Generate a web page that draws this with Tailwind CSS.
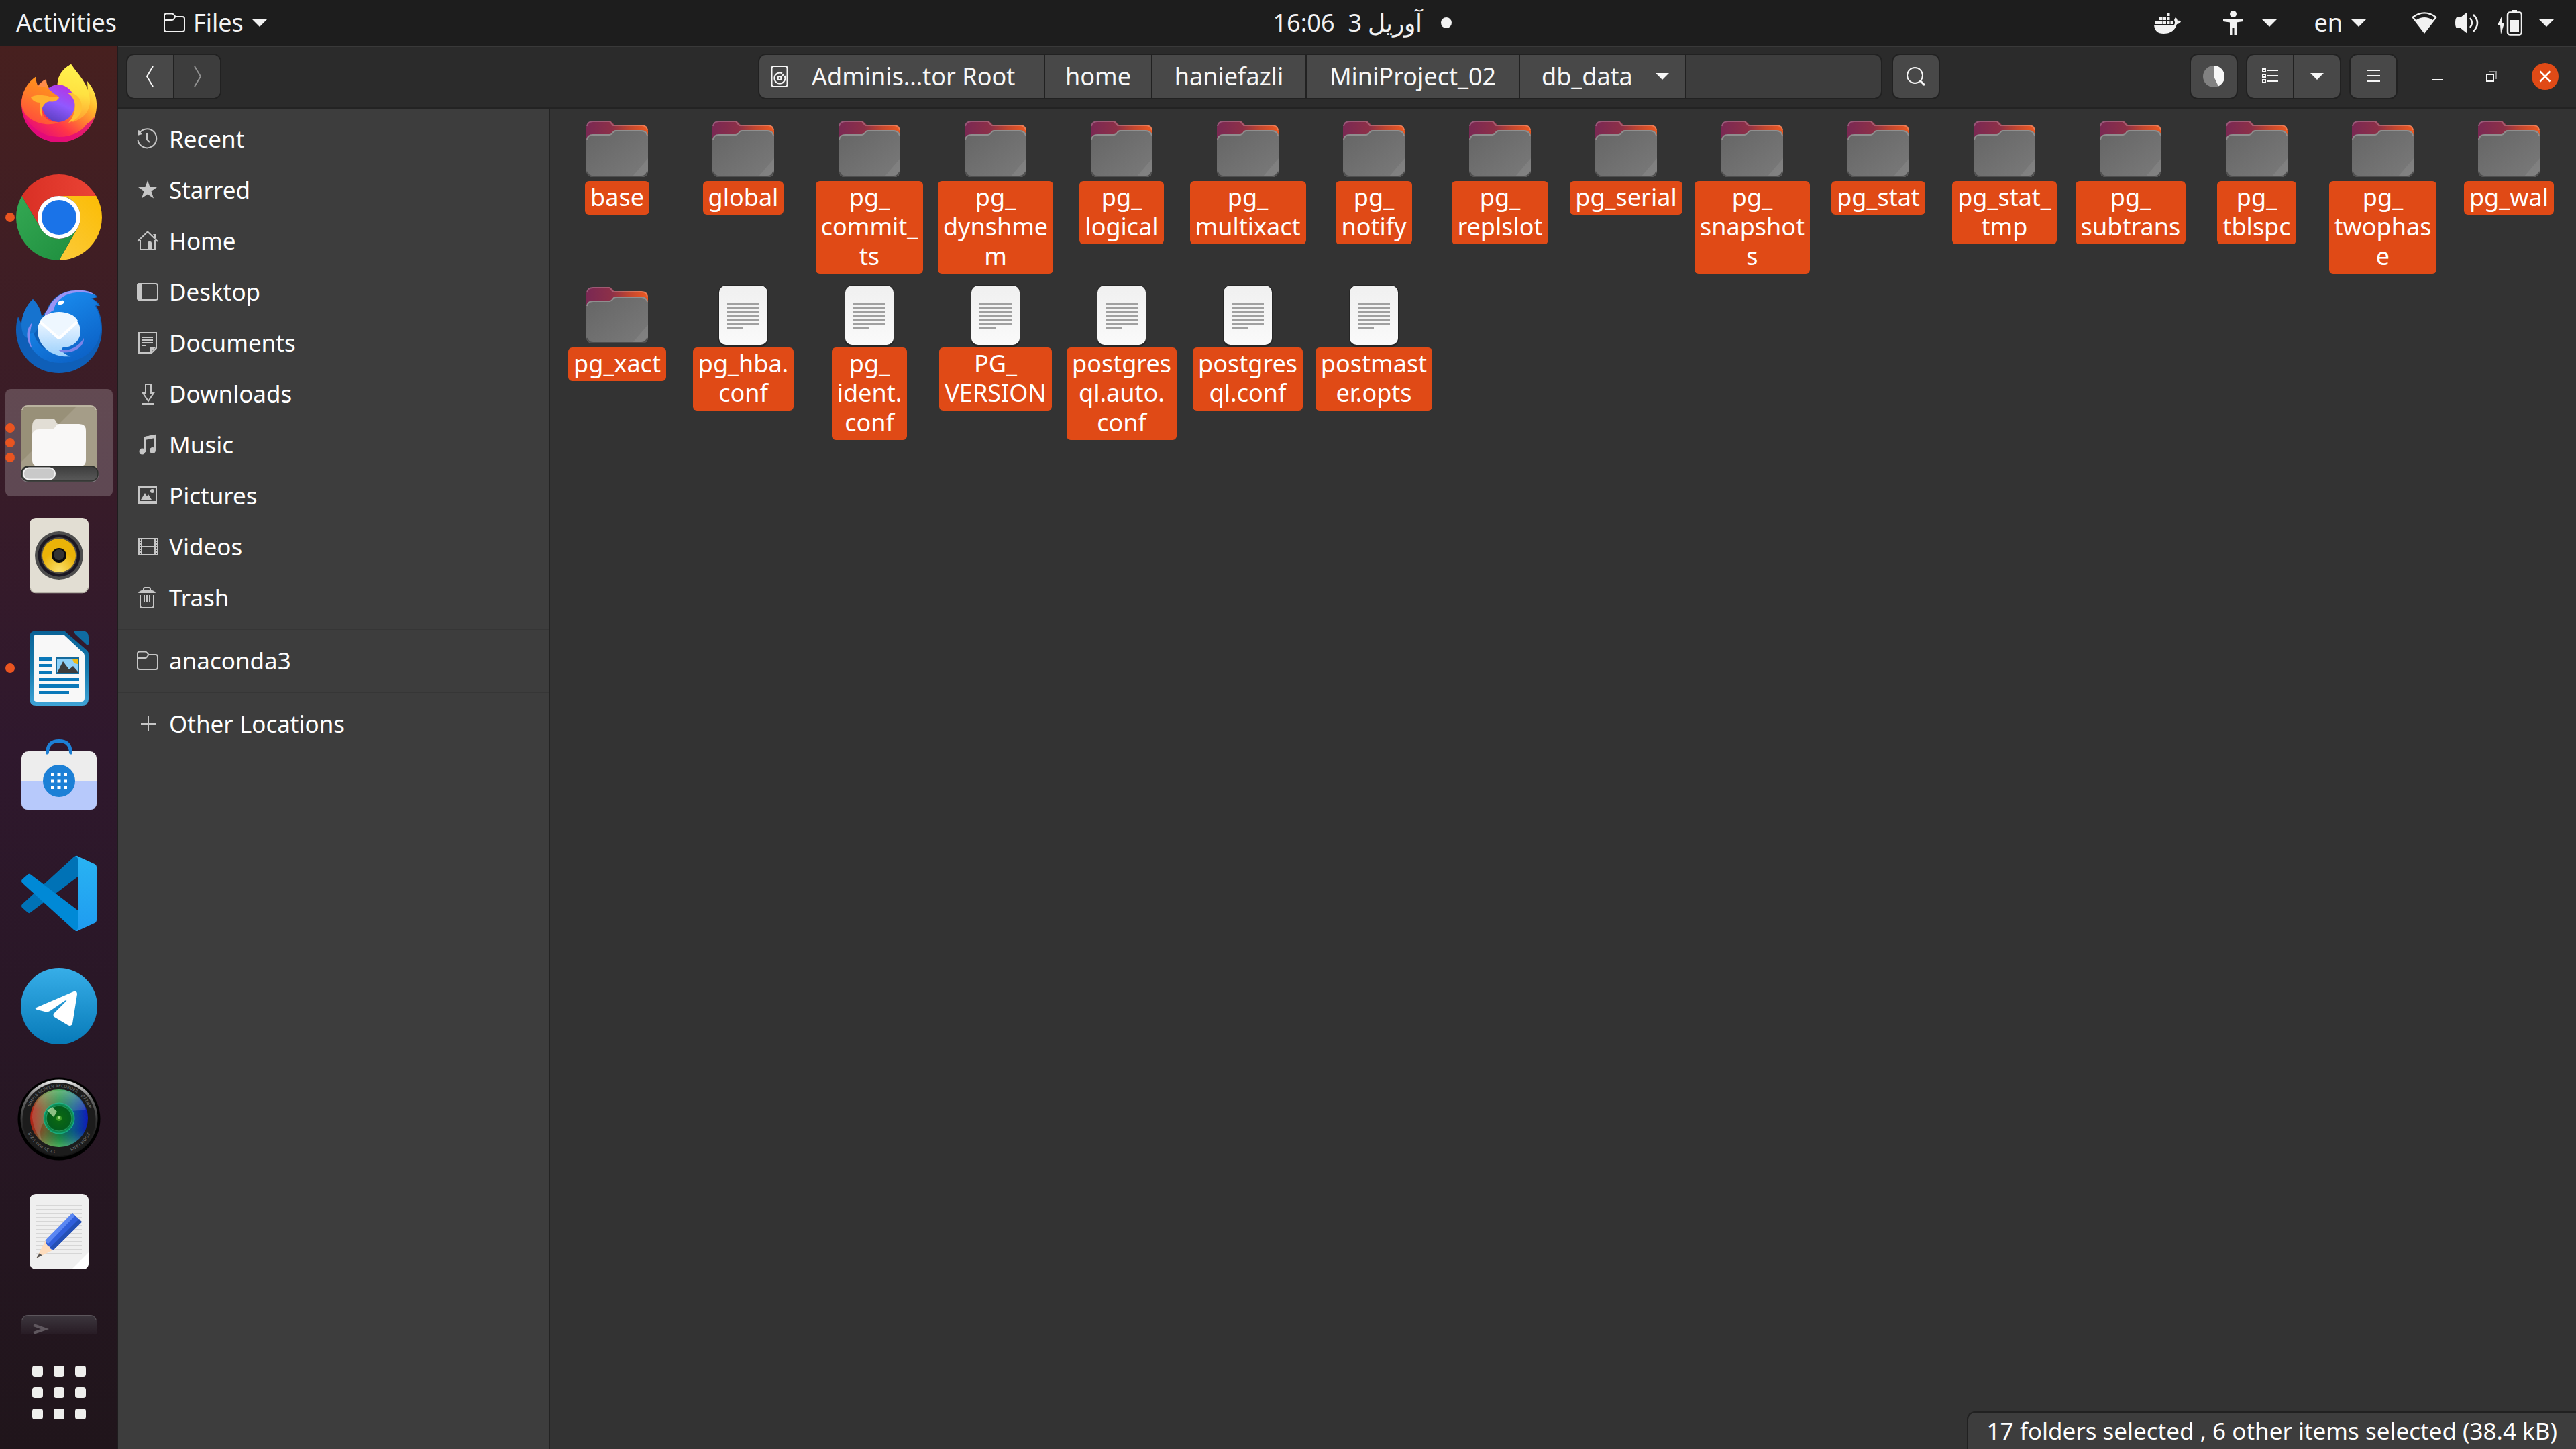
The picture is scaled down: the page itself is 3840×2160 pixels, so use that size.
<!DOCTYPE html>
<html lang="en">
<head>
<meta charset="utf-8">
<title>db_data</title>
<script src="https://cdn.jsdelivr.net/npm/@tailwindcss/browser@4"></script>
</head>
<body class="h-screen flex flex-col overflow-hidden bg-[#333333] text-white font-['Noto_Sans',sans-serif] text-[35px] leading-[44px]">

<!-- Shared symbols -->
<svg class="absolute size-0" aria-hidden="true">
  <defs>
    <linearGradient id="fBack" x1="0" y1="0" x2="1" y2="0"><stop offset="0" stop-color="#7a2853"/><stop offset=".42" stop-color="#8d3048"/><stop offset=".7" stop-color="#c3472f"/><stop offset="1" stop-color="#ee5a22"/></linearGradient>
    <linearGradient id="fFront" x1="0" y1="0" x2="1" y2="1"><stop offset="0" stop-color="#656565"/><stop offset="1" stop-color="#7a7a7a"/></linearGradient>
    <linearGradient id="paper" x1="0" y1="0" x2="0" y2="1"><stop offset="0" stop-color="#f0f0f0"/><stop offset="1" stop-color="#fafafa"/></linearGradient>
  </defs>
  <symbol id="folder" viewBox="0 0 96 96">
    <path d="M2 16Q2 6 12 6H36Q39 6 40.500 8.500L44 12H84Q94 12 94 22V60H2Z" fill="url(#fBack)"/>
    <path d="M3 14Q4 7 12 7H37L42 13H85Q92 13 93 20" fill="none" stroke="#fff" stroke-opacity=".22" stroke-width="2"/>
    <path d="M2 36Q2 26 12 26H36Q39 26 40.500 24L43 21Q44 20 46 20H84Q94 20 94 30V80Q94 90 84 90H12Q2 90 2 80Z" fill="url(#fFront)"/>
    <path d="M94 62V80Q94 90 84 90H70Z" fill="#fff" fill-opacity=".07"/>
    <path d="M3 34Q4 27 12 27H37Q39 27 41 24.500Q43 21 46 21H84Q91 21 93 28" fill="none" stroke="#999" stroke-width="2" stroke-opacity=".8"/>
    <path d="M3 82Q5 89 12 89H84Q91 89 93 82" fill="none" stroke="#4e4e4e" stroke-width="2"/>
  </symbol>
  <symbol id="doc" viewBox="0 0 96 96">
    <rect x="11" y="3" width="74" height="92" rx="11" fill="#262626"/>
    <rect x="12" y="4" width="72" height="88" rx="10" fill="url(#paper)"/>
    <path d="M24 31H72M24 37H72M24 43H72M24 49H72M24 55H72M24 61H72M24 67H48" stroke="#a0a0a0" stroke-width="2"/>
  </symbol>
  <symbol id="tri" viewBox="0 0 24 12"><path d="M0 0H24L12 12Z" fill="currentColor"/></symbol>
  <symbol id="folder-sym" viewBox="0 0 32 32"><path d="M1 27V5Q1 3 3.500 2.500H12Q14 2.500 15 4L17.500 7H28Q31 7 31 10V26Q31 29 28 29H4Q1 29 1 26ZM1 13Q1 12 3 12H12.500Q14 12 15 10.500L17.500 7" fill="none" stroke="currentColor" stroke-width="2"/></symbol>
</svg>

<!-- Top bar -->
<header class="h-[68px] shrink-0 bg-[#1d1d1d] text-[#f2f2f2] grid grid-cols-[1fr_auto_1fr] items-center text-[36px]">
  <div class="flex items-center pl-6">
    <button class="mr-[70px]">Activities</button>
    <button class="flex items-center"><svg class="size-8 mr-3"><use href="#folder-sym"/></svg>Files<svg class="w-6 h-3 ml-3"><use href="#tri"/></svg></button>
  </div>
  <button class="flex items-center gap-7 pl-[222px]"><span class="flex gap-5"><span>16:06</span><span>3 آوریل</span></span><span class="size-4 rounded-full bg-[#f2f2f2]"></span></button>
  <div class="flex items-center justify-end pr-8">
    <button aria-label="Docker" class="mr-[63px]"><svg class="w-10 h-8" viewBox="0 0 40 32"><path d="M0 19H30Q32 16 30 12Q31 9 32 8Q35 10 35 13Q38 12 40 14Q39 17 34 18Q30 32 14 32Q1 32 0 19ZM2 13H7V18H2ZM8 13H12.500V18H8ZM13.500 13H18V18H13.500ZM19 13H23.500V18H19ZM24.500 13H28V18H24.500ZM8 7H12.500V12H8ZM13.500 7H18V12H13.500ZM19 7H23.500V12H19ZM19 1H23.500V6H19Z" fill="currentColor"/></svg></button>
    <button aria-label="Accessibility" class="flex items-center gap-[27px] mr-[54px]"><svg class="w-[30px] h-9" viewBox="0 0 30 36"><circle cx="15" cy="5" r="5" fill="currentColor"/><path d="M0 13H30V16L20 17.500V36H16.500V26H13.500V36H10V17.500L0 16Z" fill="currentColor"/></svg><svg class="w-6 h-3"><use href="#tri"/></svg></button>
    <button class="flex items-center gap-3 mr-[67px]">en<svg class="w-6 h-3"><use href="#tri"/></svg></button>
    <button aria-label="System" class="flex items-center gap-6">
      <span class="flex items-center gap-[27px]">
        <svg class="w-[38px] h-8" viewBox="0 0 38 32"><path d="M0 7.500Q19 -7 38 7.500L19 32ZM3.500 8L6.500 12Q19 4 31.500 12L34.500 8Q19 -3 3.500 8Z" fill="currentColor" fill-rule="evenodd"/></svg>
        <svg class="w-9 h-9" viewBox="0 0 36 36"><path d="M0 18Q0 12 2 10H8L18 2V34L8 26H2Q0 24 0 18Z" fill="currentColor"/><path d="M22 11Q28 18 22 25M27 6Q39 18 27 31" fill="none" stroke="currentColor" stroke-width="2.500"/></svg>
        <svg class="w-[37px] h-[38px]" viewBox="0 0 37 38"><path d="M7 8L0 22H4L5 36L10 20H6Z" fill="currentColor"/><path d="M22 0H29V3H22Z" fill="currentColor"/><rect x="15" y="3.500" width="21" height="33" rx="3.500" fill="none" stroke="currentColor" stroke-width="2.500"/><rect x="19" y="15" width="13" height="18" fill="currentColor"/></svg>
      </span>
      <svg class="w-6 h-3"><use href="#tri"/></svg>
    </button>
  </div>
</header>

<div class="flex flex-1 min-h-0">

<!-- Dock -->
<nav aria-label="Dock" class="w-44 shrink-0 flex flex-col border-r-2 border-[#1f1c1e] bg-linear-to-b from-[#47201f] via-[#2f182d] to-[#20151b]">
  <ul class="flex-1 min-h-0 overflow-hidden flex flex-col gap-2 pl-2 pr-1.5 pt-2">
    <li class="h-40 shrink-0 grid place-items-center"><button aria-label="Firefox">
      <svg class="size-32" viewBox="0 0 128 128">
        <defs>
          <linearGradient id="ff1" x1=".85" y1=".1" x2=".2" y2=".95"><stop offset=".05" stop-color="#fff44f"/><stop offset=".3" stop-color="#ffb52b"/><stop offset=".5" stop-color="#ff7b31"/><stop offset=".7" stop-color="#ff3647"/><stop offset="1" stop-color="#e3067f"/></linearGradient>
          <linearGradient id="ff2" x1=".7" y1="0" x2=".3" y2="1"><stop offset="0" stop-color="#b833e1"/><stop offset=".5" stop-color="#9059ff"/><stop offset="1" stop-color="#5b3fc0"/></linearGradient>
          <linearGradient id="ff3" x1=".6" y1="0" x2=".5" y2="1"><stop offset="0" stop-color="#fff44f"/><stop offset=".5" stop-color="#ffe141"/><stop offset="1" stop-color="#ff9a2e"/></linearGradient>
          <linearGradient id="ff4" x1=".7" y1="0" x2=".3" y2="1"><stop offset="0" stop-color="#ff9a16"/><stop offset=".5" stop-color="#ff7a2a"/><stop offset="1" stop-color="#ff4a3c"/></linearGradient>
        </defs>
        <path d="M82 4C90 16 103 30 107 48L106 29C116 40 121 54 120 68C118 98 94 120 64 120C32 120 8 96 8 62C8 48 16 33 30 22C29 28 31 33 33 37C36 33 40 30 45 26C45 32 47 38 52 42L62 38C60 22 70 10 82 4Z" fill="url(#ff1)"/>
        <path d="M9 72C18 98 40 112 64 112C84 112 98 104 106 92C110 90 114 86 117 82C110 106 88 120 64 120C34 120 12 98 9 72Z" fill="#e0097c" opacity=".8"/>
        <path d="M82 4C90 16 110 34 110 58C110 76 98 86 84 90C90 78 90 62 84 50C78 42 70 36 62 36C61 22 70 10 82 4Z" fill="url(#ff3)"/>
        <path d="M32 37C35 32 40 28 45 26L45 40Z" fill="#ff8c4a"/>
        <ellipse cx="63" cy="62" rx="25" ry="28" fill="url(#ff2)"/>
        <path d="M76 46C90 46 98 55 98 68C98 80 90 87 78 91C87 82 89 70 87 60C85 53 81 49 76 46Z" fill="#ffc134"/>
        <path d="M30 22C29 28 30 33 32 37C40 36 45 38 50 42C55 47 60 49 64 53C62 58 57 60 50 59C44 60 39 64 38 70C39 84 50 91 63 90C50 98 12 92 8 64C8 46 16 31 30 22Z" fill="url(#ff4)"/>
        <path d="M22 53C30 48 42 50 50 52C56 53 60 52 64 53C62 58 57 60 50 59C44 60 41 64 39 69L38 82C35 76 35 68 36 61C30 61 24 58 22 53Z" fill="#ffb12e"/>
      </svg></button></li>
    <li class="h-40 shrink-0 grid place-items-center relative"><span class="absolute left-0 top-[73px] size-3.5 rounded-full bg-[#e95420]"></span><button aria-label="Google Chrome">
      <svg class="size-32" viewBox="0 0 128 128">
        <defs><linearGradient id="cr" x1="0" x2="1"><stop offset="0" stop-color="#d93025"/><stop offset="1" stop-color="#ea4335"/></linearGradient><linearGradient id="cg" x1="0" x2="1" y1="0" y2="1"><stop offset="0" stop-color="#34a853"/><stop offset="1" stop-color="#1e8e3e"/></linearGradient><linearGradient id="cy" x1="1" x2=".3" y1="0" y2="1"><stop offset="0" stop-color="#fbbc04"/><stop offset="1" stop-color="#fcc934"/></linearGradient></defs>
        <path d="M64 32H119.400A64 64 0 0 0 8.600 32L36.300 80A32 32 0 0 1 64 32Z" fill="url(#cr)"/>
        <path d="M119.400 32A64 64 0 0 1 64 128L91.700 80A32 32 0 0 0 64 32Z" fill="url(#cy)"/>
        <path d="M64 128A64 64 0 0 1 8.600 32L36.300 80A32 32 0 0 0 91.700 80Z" fill="url(#cg)"/>
        <circle cx="64" cy="64" r="32" fill="#fff"/><circle cx="64" cy="64" r="26" fill="#1a73e8"/>
      </svg></button></li>
    <li class="h-40 shrink-0 grid place-items-center"><button aria-label="Thunderbird">
      <svg class="size-32" viewBox="0 0 128 128">
        <defs><linearGradient id="tb1" x1=".2" y1="0" x2=".8" y2="1"><stop offset="0" stop-color="#1b91f3"/><stop offset="1" stop-color="#0b5fc4"/></linearGradient><linearGradient id="tb2" x1="0" y1="0" x2="0" y2="1"><stop offset="0" stop-color="#fff"/><stop offset=".5" stop-color="#cfe8ff"/><stop offset="1" stop-color="#9bd0fb"/></linearGradient></defs>
        <path d="M91 5C104 4 116 8 122 15C119 16 115 16 112 17C118 19 123 23 125 28L119 27C125 38 128 50 128 63C128 100 99 128 64 128C28 128 0 100 0 64C0 56 1 50 3 44C5 48 6 51 8 55C9 40 16 26 25 18C33 26 37 34 38 44C41 40 44 37 46 34C52 16 70 4 91 5Z" fill="#0f5fb8"/>
        <path d="M91 7C104 6 116 9 120 15L111 17C117 19 121 23 123 28L117 27C124 38 126 50 126 62C125 92 98 113 66 113C40 113 18 96 16 68C18 58 22 54 24 53C24 68 30 84 42 92L96 60L44 44C48 22 68 7 91 7Z" fill="url(#tb1)"/>
        <path d="M8 55C9 40 16 26 25 18C33 26 37 34 38 46L30 66C24 72 18 66 17 76C10 74 8 64 8 55Z" fill="#1673cf"/>
        <path d="M43 40C44 37 46 34 48 32C54 16 72 4 91 5C102 4 112 7 118 12C104 6 86 7 74 12C62 18 56 28 57 34C50 36 46 44 43 46Z" fill="#9a94f5"/>
        <path d="M24 53C14 62 14 80 24 92C19 80 20 66 24 53Z" fill="#8a8cf0"/>
        <path d="M64 38C82 38 96 50 96 66C96 80 84 90 70 90C64 92 72 102 82 103C56 106 32 90 32 64C32 50 46 38 64 38Z" fill="url(#tb2)"/>
        <path d="M62 93C80 96 92 90 101 76C102 88 86 100 68 97Z" fill="#7c83e8"/>
        <path d="M36 50L60 72Q64 76 68 72L92 50C88 42 76 37 64 37C52 37 40 42 36 50Z" fill="#eef7ff"/>
        <path d="M36 52L61 74Q64 77 67 74L91 52" fill="none" stroke="#fff" stroke-width="4"/>
        <ellipse cx="67" cy="23" rx="5" ry="3" fill="#fff" transform="rotate(-20 67 23)"/>
      </svg></button></li>
    <li class="h-40 shrink-0 grid place-items-center relative rounded-lg bg-white/20">
      <span class="absolute left-0 top-[51px] flex flex-col gap-2"><span class="size-3.5 rounded-full bg-[#e95420]"></span><span class="size-3.5 rounded-full bg-[#e95420]"></span><span class="size-3.5 rounded-full bg-[#e95420]"></span></span>
      <button aria-label="Files">
      <svg class="size-32" viewBox="0 0 128 128">
        <defs><linearGradient id="hd" x1="0" y1="0" x2="0" y2="1"><stop offset="0" stop-color="#3c3c3c"/><stop offset="1" stop-color="#5a5a5a"/></linearGradient></defs>
        <rect x="8" y="8" width="112" height="112" rx="9" fill="#989078"/>
        <path d="M91 9H111Q120 9 120 18V110H8V92Z" fill="#a59d88"/>
        <path d="M9 15Q10 9 17 9H111Q118 9 119 15" fill="none" stroke="#c4bdab" stroke-width="1.500"/>
        <path d="M24 40Q24 28 34 28H54Q57 28 58 30L63 38V60H24Z" fill="#e2ded5"/>
        <path d="M24 52Q25 44 34 44H53Q56 44 58 41L61 37Q62 36 64 36H94Q104 36 104 46V90Q104 99 95 99H33Q24 99 24 90Z" fill="#f9f8f7"/>
        <rect x="7" y="100" width="116" height="23" rx="11" fill="#7b757a"/>
        <rect x="8" y="99" width="114" height="22" rx="10" fill="url(#hd)" stroke="#2c2f2b" stroke-width="1.500"/>
        <rect x="11" y="101.500" width="47" height="17" rx="8" fill="#c9c9c9" stroke="#f2f2f2" stroke-width="2"/>
      </svg></button></li>
    <li class="h-40 shrink-0 grid place-items-center"><button aria-label="Rhythmbox">
      <svg class="size-32" viewBox="0 0 128 128">
        <defs><radialGradient id="rb" cx=".5" cy=".95" r=".8"><stop offset="0" stop-color="#fbe06a"/><stop offset=".7" stop-color="#eab308"/></radialGradient></defs>
        <rect x="20" y="8" width="88" height="112" rx="9" fill="#e2ded3"/><path d="M21 113Q23 119.500 29 119.500H99Q105 119.500 107 113" fill="none" stroke="#b5b1a6" stroke-width="1.500"/>
        <circle cx="64" cy="64" r="36" fill="#4d4d4d"/><circle cx="64" cy="64" r="31.500" fill="#1a1722"/><circle cx="64" cy="64" r="27" fill="#555146"/><circle cx="64" cy="64" r="25" fill="url(#rb)"/><circle cx="64" cy="64" r="11" fill="#0b0b0b"/><circle cx="64" cy="63" r="8" fill="#333"/>
      </svg></button></li>
    <li class="h-40 shrink-0 grid place-items-center relative"><span class="absolute left-0 top-[73px] size-3.5 rounded-full bg-[#e95420]"></span><button aria-label="LibreOffice Writer">
      <svg class="size-32" viewBox="0 0 128 128">
        <defs><linearGradient id="lw" x1="0" y1="0" x2="0" y2="1"><stop offset="0" stop-color="#0a6296"/><stop offset=".5" stop-color="#157aad"/><stop offset="1" stop-color="#3fa3d6"/></linearGradient></defs>
        <path d="M20 18Q20 8 30 8H69Q73 8 75 11L106 38Q108 40 108 44V110Q108 120 98 120H30Q20 120 20 110Z" fill="url(#lw)"/>
        <path d="M87 8H98Q108 8 108 18V28Q107 32 104 28L88 13Q86 10 87 8Z" fill="#0f6ca2"/>
        <path d="M26 19Q26 14 31 14H68Q71 14 72 15L101 42Q102 44 102 46V109Q102 114 97 114H31Q26 114 26 109Z" fill="#f8f8f8"/>
        <path d="M34 50.500H54M34 60.500H54M34 70.500H54M34 80.500H94M34 90.500H94M34 100.500H79" stroke="#0a78b9" stroke-width="5"/>
        <rect x="59" y="48" width="35" height="25" fill="#156a9c"/><rect x="61" y="50" width="31" height="21" fill="#8ed0f7"/><path d="M61 71L70 54L79 66L85 61L92 69V71Z" fill="#3c3c3c"/><path d="M84 50H92V58Q85 58 84 50Z" fill="#f0bb12"/>
      </svg></button></li>
    <li class="h-40 shrink-0 grid place-items-center"><button aria-label="Software">
      <svg class="size-32" viewBox="0 0 128 128">
        <rect x="8" y="20" width="112" height="87" rx="10" fill="#ededed"/><path d="M8 64H120V97Q120 107 110 107H18Q8 107 8 97Z" fill="#b7c9fb"/>
        <path d="M46.500 22Q47 4.500 64 4.500T81.500 22" fill="none" stroke="#1c80d6" stroke-width="5" stroke-linecap="round"/>
        <circle cx="64" cy="64" r="24" fill="#1c80d6"/>
        <path d="M52 54.500H76M52 64H76M52 73.500H76" stroke="#fff" stroke-width="5" stroke-dasharray="5 4.500"/>
      </svg></button></li>
    <li class="h-40 shrink-0 grid place-items-center"><button aria-label="Visual Studio Code">
      <svg class="size-32" viewBox="0 0 128 128">
        <defs><linearGradient id="vs" x1="0" y1="0" x2="0" y2="1"><stop offset="0" stop-color="#29b3f3"/><stop offset="1" stop-color="#1f9cf0"/></linearGradient></defs>
        <path d="M86 9.500Q89 7 92 8V39L21 92.500Q19 94 17 92L9 85Q7 82.500 9 80Z" fill="#0072b6"/>
        <path d="M9 48Q7 45.500 9 43L17 36Q19 34 21.500 35.500L92 89V120Q89 120 86 118Z" fill="#0089d6"/>
        <path d="M92 8.500L117 20Q120 21.500 120 25V103Q120 106.500 117 108L92 119.500Q90 120.500 88 119.500Q92 119 92 115V13Q92 9 88 8.500Q90 7.500 92 8.500Z" fill="url(#vs)"/>
      </svg></button></li>
    <li class="h-40 shrink-0 grid place-items-center"><button aria-label="Telegram">
      <svg class="size-32" viewBox="0 0 128 128">
        <defs><linearGradient id="tg" x1="0" y1="0" x2="0" y2="1"><stop offset="0" stop-color="#37aee8"/><stop offset="1" stop-color="#077ab8"/></linearGradient></defs>
        <circle cx="64" cy="64" r="57" fill="url(#tg)"/>
        <path d="M30 66Q27 68 31 69L43 72Q48 73 52 70L73 55.500Q77 54 74 57L57 74Q54 77 57 80L77 92Q82 95 84 90L91 46Q91 41 86 42Z" fill="#fff"/>
      </svg></button></li>
    <li class="h-40 shrink-0 grid place-items-center"><button aria-label="SimpleScreenRecorder">
      <svg class="size-32" viewBox="0 0 128 128">
        <defs>
          <linearGradient id="sr1" x1="0" y1="0" x2="0" y2="1"><stop offset="0" stop-color="#f0f0f0"/><stop offset=".25" stop-color="#666"/><stop offset=".6" stop-color="#2a2a2a"/><stop offset="1" stop-color="#111"/></linearGradient>
          <linearGradient id="sr2" x1="0" x2="1"><stop offset="0" stop-color="#c4150f"/><stop offset=".25" stop-color="#7a5a2c"/><stop offset=".5" stop-color="#0b7a3a"/><stop offset=".75" stop-color="#0a5490"/><stop offset="1" stop-color="#0c10c4"/></linearGradient>
          <linearGradient id="sr3" x1="0" y1="0" x2="0" y2="1"><stop offset="0" stop-color="#8fe28a"/><stop offset=".35" stop-color="#3fae5a" stop-opacity=".1"/><stop offset=".7" stop-color="#0a7040" stop-opacity=".2"/><stop offset="1" stop-color="#7fe07a"/></linearGradient>
          <radialGradient id="sr4"><stop offset="0" stop-color="#0c6a10"/><stop offset=".75" stop-color="#045c1c"/><stop offset="1" stop-color="#12a878"/></radialGradient>
          <path id="ring" d="M17 64A47 47 0 0 1 111 64A47 47 0 0 1 17 64"/>
        </defs>
        <circle cx="64" cy="64" r="61.500" fill="#000"/><circle cx="64" cy="63" r="57.500" fill="url(#sr1)"/><circle cx="64" cy="64.500" r="54.500" fill="#1c1c1c"/>
        <g fill="#777" font-size="6" font-family="DejaVu Sans, sans-serif"><text><textPath href="#ring" startOffset="19">SIMPLE SCREEN RECORDER</textPath></text><text><textPath href="#ring" startOffset="109">Ø77MM</textPath></text><text><textPath href="#ring" startOffset="168">ZOOM LENS</textPath></text><text><textPath href="#ring" startOffset="226">17-35 mm 1:2-8</textPath></text></g>
        <circle cx="64" cy="63" r="43" fill="url(#sr2)"/><circle cx="64" cy="63" r="43" fill="url(#sr3)" opacity=".55"/>
        <path d="M38 96C30 70 48 50 104 51C100 34 84 22 64 22C42 22 24 38 24 62C26 78 32 90 38 96Z" fill="#fff" opacity=".14"/>
        <circle cx="64" cy="63" r="23" fill="url(#sr4)"/><circle cx="64" cy="63" r="23" fill="none" stroke="#22c8a0" stroke-opacity=".6"/><circle cx="64" cy="63" r="19" fill="none" stroke="#5ce0a0" stroke-opacity=".4"/>
        <path d="M46 51L54 46L61 53L56 61Z" fill="#c8e8b0" opacity=".7"/><circle cx="64" cy="63" r="4" fill="#3f9a2a"/><circle cx="64" cy="62" r="2" fill="#a5e08a"/>
      </svg></button></li>
    <li class="h-40 shrink-0 grid place-items-center"><button aria-label="Text Editor">
      <svg class="size-32" viewBox="0 0 128 128">
        <rect x="20" y="8" width="88" height="112" rx="9" fill="#efefef"/><path d="M108 95V111Q108 120 99 120H83Z" fill="#fff"/>
        <path d="M30 25H98M30 31H98M30 37H98M30 43H98M30 49H98M30 55H98M30 61H98M30 67H98M30 73H98M30 79H98M30 85H98M30 91H98M30 97H98" stroke="#d6d6d6" stroke-width="2"/>
        <path d="M44 77L30 104L56 91Z" fill="#fddcbd"/><path d="M35 96L30 104L38.500 99.500Z" fill="#555"/>
        <path d="M84 36L98 49.500L56 91Q50 91 51 87Q45 86 44 77.500Z" fill="#305fdb"/><path d="M84 36L88 40L48 82Q45 81 43.500 77Z" fill="#5b87f2"/><path d="M94 45L98 49.500L56 91L50.500 88Z" fill="#2450b4"/>
      </svg></button></li>
    <li class="h-40 shrink-0 grid place-items-center"><button aria-label="Terminal">
      <svg class="size-32" viewBox="0 0 128 128">
        <defs><linearGradient id="tm" x1="0" y1="0" x2="0" y2="1"><stop offset="0" stop-color="#3d373e"/><stop offset=".32" stop-color="#281c25"/><stop offset="1" stop-color="#231721"/></linearGradient></defs>
        <path d="M8 108V30Q8 20 18 20H110Q120 20 120 30V108Z" fill="url(#tm)"/><path d="M9 27Q11 20.500 18 20.500H110Q117 20.500 119 27" fill="none" stroke="#5c565c"/>
        <path d="M26 35L43 41L26 47" fill="none" stroke="#5f575e" stroke-width="4"/>
      </svg></button></li>
  </ul>
  <button aria-label="Show Applications" class="h-[172px] pt-1 pl-0.5 shrink-0 grid place-items-center">
    <svg class="size-20" viewBox="0 0 80 80" fill="#eeeeec"><rect width="16" height="16" rx="4"/><rect x="32" width="16" height="16" rx="4"/><rect x="64" width="16" height="16" rx="4"/><rect y="32" width="16" height="16" rx="4"/><rect x="32" y="32" width="16" height="16" rx="4"/><rect x="64" y="32" width="16" height="16" rx="4"/><rect y="64" width="16" height="16" rx="4"/><rect x="32" y="64" width="16" height="16" rx="4"/><rect x="64" y="64" width="16" height="16" rx="4"/></svg>
  </button>
</nav>

<!-- Files window -->
<div class="flex-1 min-w-0 flex flex-col">
  <div class="h-[94px] shrink-0 bg-[#2b2b2b] border-b-2 border-[#232323] shadow-[inset_0_2px_0_#393939] flex items-center pl-2 pr-1.5 text-[36px] text-[#f7f7f7]">
    <div class="flex-1 flex pl-1">
      <div class="flex h-[68px] rounded-xl border-2 border-[#212121] bg-[#484848] overflow-hidden">
        <button aria-label="Back" class="w-[70px] border-r-2 border-[#212121] grid place-items-center"><svg class="size-8" viewBox="0 0 32 32"><path d="M20 1L11 16L20 31" fill="none" stroke="currentColor" stroke-width="2"/></svg></button>
        <button aria-label="Forward" disabled class="w-[68px] bg-[#3d3d3d] text-[#919191] grid place-items-center"><svg class="size-8" viewBox="0 0 32 32"><path d="M12 1L21 16L12 31" fill="none" stroke="currentColor" stroke-width="2"/></svg></button>
      </div>
    </div>
    <div class="flex gap-3.5">
      <div class="flex w-[1676px] h-[68px] rounded-xl border-2 border-[#212121] bg-[#3d3d3d] overflow-hidden">
        <button class="w-[426px] bg-[#484848] border-r-2 border-[#212121] flex items-center pl-3.5"><svg class="size-8 mr-8" viewBox="0 0 32 32"><rect x="4.500" y="1" width="23" height="30" rx="3" fill="none" stroke="currentColor" stroke-width="2"/><path d="M20 11.500A8 8 0 1 0 23.500 15" fill="none" stroke="currentColor" stroke-width="2"/><circle cx="16" cy="18.500" r="2.500" fill="none" stroke="currentColor" stroke-width="2"/><path d="M18 17L22.500 12.500" stroke="currentColor" stroke-width="2"/></svg>Adminis…tor Root</button>
        <button class="w-[160px] bg-[#484848] border-r-2 border-[#212121]">home</button>
        <button class="w-[230px] bg-[#484848] border-r-2 border-[#212121]">haniefazli</button>
        <button class="w-[318px] bg-[#484848] border-r-2 border-[#212121]">MiniProject_02</button>
        <button class="w-[248px] bg-[#484848] border-r-2 border-[#212121] flex items-center justify-between pl-8 pr-6">db_data<svg class="w-5 h-2.5"><use href="#tri"/></svg></button>
      </div>
      <button aria-label="Search" class="w-[72px] h-[68px] rounded-xl border-2 border-[#212121] bg-[#484848] grid place-items-center"><svg class="size-8" viewBox="0 0 32 32"><circle cx="14.500" cy="14.500" r="11.500" fill="none" stroke="currentColor" stroke-width="2"/><path d="M22 22L29 29" stroke="currentColor" stroke-width="3"/></svg></button>
    </div>
    <div class="flex-1 flex items-center justify-end">
      <button aria-label="Disk usage" class="w-[72px] h-[68px] mr-3 rounded-xl border-2 border-[#212121] bg-[#484848] grid place-items-center"><svg class="size-8" viewBox="0 0 32 32"><circle cx="16" cy="16" r="16" fill="#828282"/><path d="M16 16V0A16 16 0 0 1 23 30.500Z" fill="currentColor"/></svg></button>
      <div class="flex h-[68px] mr-3 rounded-xl border-2 border-[#212121] bg-[#484848]">
        <button aria-label="List view" class="w-[70px] border-r-2 border-[#212121] grid place-items-center"><svg class="size-8" viewBox="0 0 32 32"><path d="M5 5H9V9H5ZM5 13H9V17H5ZM5 21H9V25H5Z" fill="none" stroke="currentColor" stroke-width="2"/><path d="M12 7H28M12 15H28M12 23H28" stroke="currentColor" stroke-width="2"/></svg></button>
        <button aria-label="View options" class="w-[68px] grid place-items-center"><svg class="w-5 h-2.5"><use href="#tri"/></svg></button>
      </div>
      <button aria-label="Menu" class="w-[72px] h-[68px] mr-5 rounded-xl border-2 border-[#212121] bg-[#484848] grid place-items-center"><svg class="size-8" viewBox="0 0 32 32"><path d="M6 7H26M6 15H26M6 23H26" stroke="currentColor" stroke-width="2"/></svg></button>
      <button aria-label="Minimize" class="w-20 grid place-items-center"><svg class="size-8" viewBox="0 0 32 32"><path d="M8 21H24" stroke="currentColor" stroke-width="2"/></svg></button>
      <button aria-label="Restore" class="w-20 grid place-items-center"><svg class="size-8" viewBox="0 0 32 32"><path d="M9 13H19V23H9Z" fill="none" stroke="currentColor" stroke-width="2"/><path d="M12 9H23V20" fill="none" stroke="#8b8b8b" stroke-width="2"/></svg></button>
      <button aria-label="Close" class="w-20 grid place-items-center"><svg class="size-10" viewBox="0 0 40 40"><circle cx="20" cy="20" r="20" fill="#e04a16"/><path d="M12.500 12.500L27.500 27.500M27.500 12.500L12.500 27.500" stroke="#fff" stroke-width="2.500"/></svg></button>
    </div>
  </div>

  <div class="flex-1 min-h-0 flex">
    <nav aria-label="Places" class="w-[644px] shrink-0 bg-[#3d3d3d] border-r-2 border-[#232323] pt-[7px] [&_a]:flex [&_a]:items-center [&_a]:h-[76px] [&_a]:pl-7 [&_a]:gap-4 [&_svg]:size-8 [&_svg]:text-[#c6c6c6] [&_hr]:border-t-2 [&_hr]:border-[#363636]">
      <a href="#"><svg viewBox="0 0 32 32"><path d="M3 8.500A14 14 0 1 1 1.500 18" fill="none" stroke="currentColor" stroke-width="2"/><path d="M1 11V4L3 3L8 9Z" fill="currentColor"/><path d="M15 7V17L19 21" fill="none" stroke="currentColor" stroke-width="2"/></svg>Recent</a>
      <a href="#"><svg viewBox="0 0 32 32"><path d="M16 2L19.500 12H30L21.500 18L25 28.500L16 22.500L7 28.500L10.500 18L2 12H12.500Z" fill="currentColor"/></svg>Starred</a>
      <a href="#"><svg viewBox="0 0 32 32"><path d="M1 17L16 2.500L31 17M5 15V29H27V15M27 12V6" fill="none" stroke="currentColor" stroke-width="2"/><path d="M16 29V19Q16 17 18 17H20Q22 17 22 19V29ZM24 6H28V12Z" fill="currentColor"/></svg>Home</a>
      <a href="#"><svg viewBox="0 0 32 32"><rect x="1" y="4" width="30" height="24" rx="3" fill="none" stroke="currentColor" stroke-width="2"/><path d="M0 7Q0 3 4 3H8V29H4Q0 29 0 25Z" fill="currentColor"/></svg>Desktop</a>
      <a href="#"><svg viewBox="0 0 32 32"><path d="M3 1H29V24L22 31H3Z" fill="none" stroke="currentColor" stroke-width="2"/><path d="M8 8H24M8 12H24M8 16H24M8 20H14" stroke="currentColor" stroke-width="2"/><path d="M20 31V22H29Z" fill="currentColor"/></svg>Documents</a>
      <a href="#"><svg viewBox="0 0 32 32"><path d="M13 2H21V15H25L17 27L9 15H13Z" fill="none" stroke="currentColor" stroke-width="2"/><path d="M8 31H26" stroke="currentColor" stroke-width="2"/></svg>Downloads</a>
      <a href="#"><svg viewBox="0 0 32 32"><path d="M12 27V5L27 2V24" fill="none" stroke="currentColor" stroke-width="2"/><path d="M12 4L27 1V6L12 9Z" fill="currentColor"/><circle cx="8" cy="26" r="4.500" fill="currentColor"/><circle cx="23.500" cy="24.500" r="4.500" fill="currentColor"/></svg>Music</a>
      <a href="#"><svg viewBox="0 0 32 32"><path d="M3 3H29V28H3Z" fill="none" stroke="currentColor" stroke-width="2"/><path d="M2 24H30V29H2ZM6 22L12 12L15 17L17 14L22 22Z" fill="currentColor"/><circle cx="23" cy="9" r="3" fill="currentColor"/></svg>Pictures</a>
      <a href="#"><svg viewBox="0 0 32 32"><path d="M7 4H27V28H7ZM7 16H27" fill="none" stroke="currentColor" stroke-width="2"/><path d="M3 3V29M31 3V29" stroke="currentColor" stroke-width="2"/><path d="M5 3V29M29 3V29" stroke="currentColor" stroke-width="2" stroke-dasharray="2 2"/></svg>Videos</a>
      <a href="#"><svg viewBox="0 0 32 32"><path d="M5 12V28Q5 31 8 31H22Q25 31 25 28V12M11 12V23M15 12V23M19 12V23" fill="none" stroke="currentColor" stroke-width="2"/><path d="M2 9Q3 6 7 5H23Q27 6 28 9Z" fill="currentColor"/><path d="M10 5V3Q10 1 12 1H18Q20 1 20 3V5" fill="none" stroke="currentColor" stroke-width="2"/></svg>Trash</a>
      <hr class="my-2">
      <a href="#"><svg><use href="#folder-sym"/></svg>anaconda3</a>
      <hr class="my-2">
      <a href="#"><svg viewBox="0 0 32 32"><path d="M6 16H28M17 5V27" stroke="currentColor" stroke-width="2"/></svg>Other Locations</a>
    </nav>

    <main class="relative flex-1 min-w-0">
      <ul id="files" role="listbox" aria-label="db_data" aria-multiselectable="true" class="grid grid-cols-[repeat(auto-fill,minmax(184px,1fr))] gap-y-3.5 px-1.5 pt-3 text-[36px] text-center"></ul>
      <p role="status" class="absolute right-0 bottom-0 h-14 flex items-center pl-7 pr-7 rounded-tl-xl border-t-2 border-l-2 border-[#212121] bg-[#3d3d3d] whitespace-nowrap">17 folders selected , 6 other items selected (38.4 kB)</p>
    </main>
  </div>
</div>
</div>

<script>
  // "|" marks where a long name wraps
  const folders = ['base','global','pg_|commit_|ts','pg_|dynshme|m','pg_|logical','pg_|multixact','pg_|notify','pg_|replslot','pg_serial','pg_|snapshot|s','pg_stat','pg_stat_|tmp','pg_|subtrans','pg_|tblspc','pg_|twophas|e','pg_wal','pg_xact'];
  const docs = ['pg_hba.|conf','pg_|ident.|conf','PG_|VERSION','postgres|ql.auto.|conf','postgres|ql.conf','postmast|er.opts'];
  const item = (icon, name) => `<li role="option" aria-selected="true" class="flex flex-col items-center"><svg class="size-24"><use href="#${icon}"/></svg><span class="rounded-md bg-[#e04a16] px-2 pt-0.5 pb-1 whitespace-nowrap">${name.replaceAll('|', '<br>')}</span></li>`;
  document.getElementById('files').innerHTML = folders.map(n => item('folder', n)).join('') + docs.map(n => item('doc', n)).join('');
</script>
</body>
</html>
